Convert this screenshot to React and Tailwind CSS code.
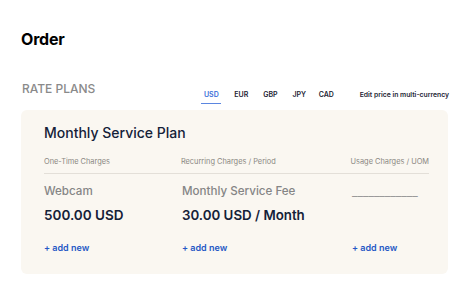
export default function App() {
  const tabs = ["USD", "EUR", "GBP", "JPY", "CAD"];
  return (
    <div className="w-[472px] h-[301px] bg-white" style={{ fontFamily: "Inter, 'Noto Sans', sans-serif" }}>
      <div className="pt-[29px] pl-[21px]">
        <h1 className="text-[16px] leading-[20px] font-bold text-black tracking-[-0.2px]">Order</h1>
      </div>
      <div className="flex items-end mt-[33px] pl-[22px] pr-[23px]">
        <div className="text-[12px] leading-[14px] font-medium text-[#8a8a8a] pb-[8px]">RATE PLANS</div>
        <div className="flex ml-[106px] text-[7px] font-semibold">
          {tabs.map((t, i) => (
            <div
              key={t}
              className={
                "flex flex-col items-center " +
                (i === 0 ? "w-[20px] mr-[12px]" : i === 1 ? "w-[16px] mr-[13px]" : i === 2 ? "w-[16px] mr-[14px]" : i === 3 ? "w-[14px] mr-[11px]" : "w-[18px]")
              }
            >
              <span className={"leading-[9px] pb-[4px] " + (i === 0 ? "text-[#3b6fd9]" : "text-[#1d2433]")}>{t}</span>
              <div className={"h-[1px] w-full " + (i === 0 ? "bg-[#5b86e0]" : "bg-transparent")}></div>
            </div>
          ))}
        </div>
        <div className="ml-auto text-[6.8px] leading-[9px] font-semibold text-[#1d2433] pb-[5px]">Edit price in multi-currency</div>
      </div>
      <div className="mx-[21px] mt-[6px] w-[427px] h-[164px] rounded-[6px] bg-[#faf7f1] pt-[14px] pl-[23px] pr-[19px]">
        <div className="text-[14px] leading-[18px] font-medium text-[#142138]">Monthly Service Plan</div>
        <div className="mt-[15px] border-b-[1.5px] border-[#e3dfd8] flex text-[7.4px] leading-[9px] text-[#8a8782] pb-[7px] whitespace-nowrap">
          <div className="w-[138px]">One-Time Charges</div>
          <div className="w-[170px]">Recurring Charges / Period</div>
          <div className="pl-[1px]">Usage Charges / UOM</div>
        </div>
        <div className="flex pt-[10px]">
          <div className="w-[138px] flex flex-col">
            <div className="text-[11.6px] leading-[15px] text-[#858585] font-medium">Webcam</div>
            <div className="mt-[8px] text-[13.5px] leading-[17px] font-semibold text-[#142138]">500.00 USD</div>
            <div className="mt-[18px] text-[9px] leading-[11px] font-semibold text-[#2457c5]">+ add new</div>
          </div>
          <div className="w-[170px] flex flex-col">
            <div className="text-[11.6px] leading-[15px] text-[#858585] font-medium whitespace-nowrap">Monthly Service Fee</div>
            <div className="mt-[8px] text-[13.3px] leading-[17px] font-semibold text-[#142138] whitespace-nowrap">30.00 USD / Month</div>
            <div className="mt-[18px] text-[9px] leading-[11px] font-semibold text-[#2457c5]">+ add new</div>
          </div>
          <div className="flex flex-col">
            <div className="text-[12px] leading-[15px] text-[#9a9a9a]">____________</div>
            <div className="mt-[8px] h-[17px]"></div>
            <div className="mt-[18px] text-[9px] leading-[11px] font-semibold text-[#2457c5]">+ add new</div>
          </div>
        </div>
      </div>
    </div>
  );
}
